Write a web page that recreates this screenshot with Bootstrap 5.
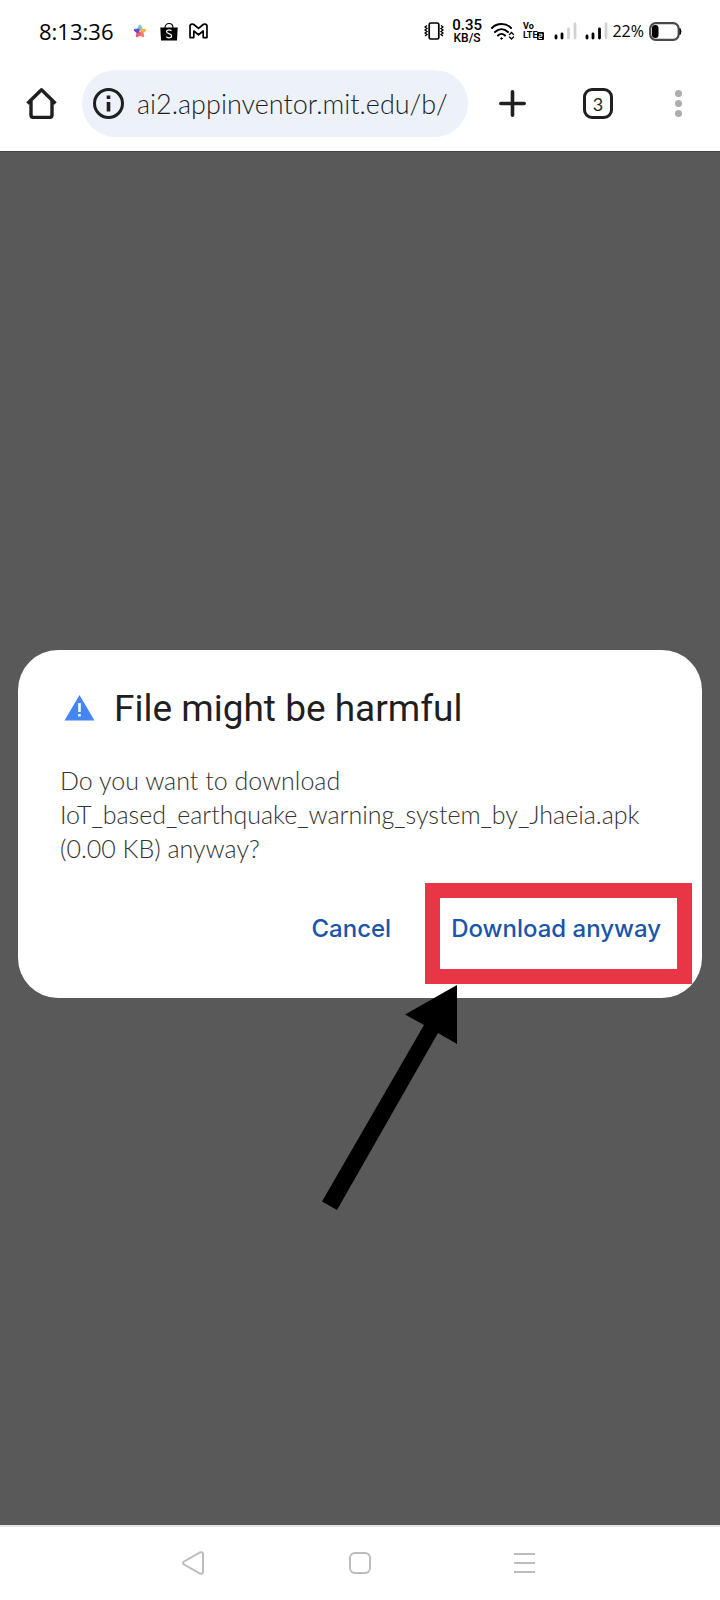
<!DOCTYPE html>
<html lang="en">
<head>
<meta charset="utf-8">
<meta name="viewport" content="width=device-width, initial-scale=1">
<title>File might be harmful</title>
<link href="https://cdn.jsdelivr.net/npm/bootstrap@5.3.0/dist/css/bootstrap.min.css" rel="stylesheet">
<style>
  body { font-family: Roboto, sans-serif; color: #1f1f1f; background: #fff; }
  svg { display: block; flex: none; }
  .status { height: 62px; padding: 0 38px 0 39px; color: #000; }
  .clock { font: 400 22px/28px "Open Sans", sans-serif; margin-right: 18px; }
  .notices { gap: 11px; }
  .signals { gap: 8px; margin: 0 4px 0 10px; }
  .rate { font: 500 12px/12px Roboto, sans-serif; }
  .rate .num { font-size: 15px; line-height: 14px; }
  .volte { font: 700 9px/9px Roboto, sans-serif; }
  .battery-text { font: 400 16px/20px "Open Sans", sans-serif; margin-right: 5px; }
  .toolbar { padding: 8px 38px 14px 26px; border-bottom: 1px solid #444; }
  .icon-btn { border: 0; padding: 0; background: none; color: #1f1f1f; }
  .address { background: #ecf1fa; height: 67px; margin: 0 31px 0 25px; padding: 0 14px 0 11px; gap: 13px; min-width: 0; }
  .address input { border: 0; background: none; outline: 0; padding: 0; min-width: 0; font: 300 27px/34px Lato, sans-serif; color: #1f1f1f; }
  .tabs { width: 31px; height: 31px; border: 3px solid #1f1f1f; border-radius: 9px; font: 400 18px/24px Lato, sans-serif; margin: 0 62px 0 57px; }
  .page { background: #595959; padding: 0 18px 30px; }
  .sheet { border-radius: 40px; padding: 37px 41px 14px 42px; min-height: 348px; }
  .sheet h1 { font: 400 37px/44px Roboto, sans-serif; }
  .sheet p { font: 300 25px/34px Lato, sans-serif; color: #333; margin: 32px 0 0; }
  .warning { margin: 0 19px 0 4px; }
  .actions { gap: 60px; margin-top: 48px; }
  .actions button { border: 0; background: none; padding: 0; font: 500 24px/32px Inter, sans-serif; color: #1a55ab; }
  .highlight { inset: -30px -31px -39px -26px; border: 15px solid #e93647; pointer-events: none; }
  .arrow { left: 304px; top: 335px; }
  .keys { height: 75px; border-top: 2px solid #e4e4e4; padding: 0 4px 2px 0; }
  .home-key { margin: 0 143px 0 145px; }
</style>
</head>
<body>
<div class="min-vh-100 d-flex flex-column">
  <header>
    <div class="status d-flex align-items-center">
      <span class="clock">8:13:36</span>
      <div class="notices d-flex align-items-center">
        <svg width="18" height="18" viewBox="0 0 18 18" stroke-width="2.500" stroke-linejoin="round"><path d="M9 4l1.500 3h-3z" fill="#6ccbc6" stroke="#6ccbc6"/><path d="M14 8l-3 2.500L10 8z" fill="#f7b548" stroke="#f7b548"/><path d="M12 14l-3-1.500 2-2z" fill="#f58263" stroke="#f58263"/><path d="M6 14l1-4 2 2z" fill="#ed5a7d" stroke="#ed5a7d"/><path d="M4 8h3.500L6.500 10z" fill="#6848d0" stroke="#6848d0"/></svg>
        <svg width="18" height="19" viewBox="0 0 18 19"><path d="M5 6C5 0 13 0 13 6" fill="none" stroke="#000" stroke-width="1.200"/><path d="M.3 5.500h17.400l-.7 13H1z"/><path d="M11.500 8.700C9 7.300 6.500 8 6.600 9.700c.1 2.200 5 1.600 5 4.200 0 2-3 2.600-5.300.8" fill="none" stroke="#fff" stroke-width="1.300"/></svg>
        <svg width="19" height="16" viewBox="0 0 20 17"><path d="M1 2.500v13h4V8.500l5 4 5-4v7h4v-13C18 .8 16 .8 15 1.600L10 5.700 5 1.600C4 .8 2 .8 1 2.500z" fill="none" stroke="#000" stroke-width="1.800" stroke-linejoin="round"/></svg>
      </div>
      <div class="ms-auto d-flex align-items-center">
        <svg width="20" height="18" viewBox="0 0 20 18" fill="none" stroke="#000"><rect x="5.200" y="1" width="9.600" height="16" rx="1.500" stroke-width="1.700"/><path d="M3 3.500L1 5l2 1.500L1 8l2 1.500L1 11l2 1.500L1 14M17 3.500L19 5l-2 1.500L19 8l-2 1.500 2 1.500-2 1.500 2 1.500" stroke-width="1.300"/></svg>
        <div class="rate text-center ms-2"><div class="num">0.35</div><div>KB/S</div></div>
        <svg class="ms-2" width="25" height="19" viewBox="0 0 25 19" fill="none" stroke="#000" stroke-width="2" stroke-linecap="round"><path d="M2 6C7 .8 16 .8 21 6M5 10c4-3.800 9-3.800 13 0M8 13.500c2-2 5-2 7 0"/><circle cx="11.500" cy="16.500" r=".8" fill="#000" stroke-width="1"/><path d="M19.500 12.500l2-2 2 2M19.500 15l2 2 2-2" stroke-width="1.300"/></svg>
        <div class="volte ms-2">Vo<br><span class="d-flex">LTE<svg width="7" height="9" viewBox="0 0 7 9"><rect y="1" width="7" height="8" rx="1"/><path d="M2 3.200h3v2H2v2.300h3" fill="none" stroke="#fff"/></svg></span></div>
        <div class="signals d-flex">
          <svg width="23" height="18" viewBox="0 0 23 18" stroke-width="2.800" stroke-linecap="round"><path d="M2 14v2M8 12v4" stroke="#000"/><path d="M14.500 7v9M21 2v14" stroke="#d2d2d2"/></svg>
          <svg width="23" height="18" viewBox="0 0 23 18" stroke-width="2.800" stroke-linecap="round"><path d="M2 14v2M8 12v4M14.500 7v9" stroke="#000"/><path d="M21 2v14" stroke="#d2d2d2"/></svg>
        </div>
        <span class="battery-text">22%</span>
        <svg width="33" height="19" viewBox="0 0 33 19"><rect x="1.200" y="1.200" width="28.500" height="16.600" rx="5.500" fill="none" stroke="#4a4a4a" stroke-width="2.200"/><rect x="3" y="3" width="6.500" height="13" rx="3"/><path d="M31 6.500q2 3 0 6z" stroke="#000"/></svg>
      </div>
    </div>
    <div class="toolbar d-flex align-items-center">
      <button class="icon-btn" aria-label="Home"><svg width="31" height="31" viewBox="0 0 31 31" fill="none" stroke="#1f1f1f" stroke-width="3.400" stroke-linejoin="round"><path d="M1.500 15.500L15.500 1.800l14 13.700M5 13v14q0 2.400 2.400 2.400h16.200q2.400 0 2.400-2.400V13"/></svg></button>
      <div class="address rounded-pill flex-fill d-flex align-items-center">
        <svg width="31" height="31" viewBox="0 0 31 31"><circle cx="15.500" cy="15.500" r="14" fill="none" stroke="#1f1f1f" stroke-width="3"/><path d="M13.700 7.500h3.600v3.600h-3.600zM13.700 14h3.600v9.500h-3.600z" fill="#1f1f1f"/></svg>
        <input class="flex-fill" type="text" aria-label="Address" value="ai2.appinventor.mit.edu/b/">
      </div>
      <button class="icon-btn" aria-label="New tab"><svg width="27" height="27" viewBox="0 0 27 27" stroke="#1f1f1f" stroke-width="3.600" stroke-linecap="round"><path d="M13.500 1.800v23.400M1.800 13.500h23.400"/></svg></button>
      <button class="icon-btn tabs" aria-label="Tabs">3</button>
      <button class="icon-btn" aria-label="Menu"><svg width="7" height="27" viewBox="0 0 7 27" fill="#adadad"><circle cx="3.500" cy="3.500" r="3.500"/><circle cx="3.500" cy="13.500" r="3.500"/><circle cx="3.500" cy="23.500" r="3.500"/></svg></button>
    </div>
  </header>
  <main class="page flex-fill d-flex flex-column justify-content-center">
    <section class="sheet bg-white position-relative">
      <div class="d-flex align-items-center">
        <svg class="warning" width="31" height="27" viewBox="0 0 31 27"><path d="M15.500 0l15 25.500H.5z" fill="#4486f4"/><path d="M14.200 8h2.600v9h-2.600zM14.200 19h2.600v2.500h-2.600z" fill="#fff"/></svg>
        <h1 class="m-0">File might be harmful</h1>
      </div>
      <p>Do you want to download<br>IoT_based_earthquake_warning_system_by_Jhaeia.apk<br>(0.00 KB) anyway?</p>
      <div class="actions d-flex justify-content-end">
        <button>Cancel</button>
        <div class="position-relative d-flex">
          <button>Download anyway</button>
          <div class="highlight position-absolute"></div>
        </div>
      </div>
      <svg class="arrow position-absolute" width="136" height="226" viewBox="0 0 136 226"><path d="M135 0v59l-19-11L15 225 0 216.500 102 40 83 29.500z"/></svg>
    </section>
  </main>
  <footer class="keys bg-white d-flex align-items-center justify-content-center">
    <button class="icon-btn" aria-label="Back"><svg width="22" height="24" viewBox="0 0 22 24" fill="none" stroke="#bcbcbc" stroke-width="2"><path d="M2 10.500L18 1.500q3-1 3 1.500v18q0 2.500-3 1.500l-16-9q-2-1.500 0-3z"/></svg></button>
    <button class="icon-btn home-key" aria-label="Home screen"><svg width="22" height="22" viewBox="0 0 22 22" fill="none" stroke="#bcbcbc" stroke-width="2"><rect x="1" y="1" width="20" height="20" rx="5"/></svg></button>
    <button class="icon-btn" aria-label="Recent apps"><svg width="21" height="22" viewBox="0 0 21 22" stroke="#bcbcbc" stroke-width="2"><path d="M0 2h21M0 11h21M0 20h21"/></svg></button>
  </footer>
</div>
<script src="https://cdn.jsdelivr.net/npm/bootstrap@5.3.0/dist/js/bootstrap.bundle.min.js"></script>
</body>
</html>
